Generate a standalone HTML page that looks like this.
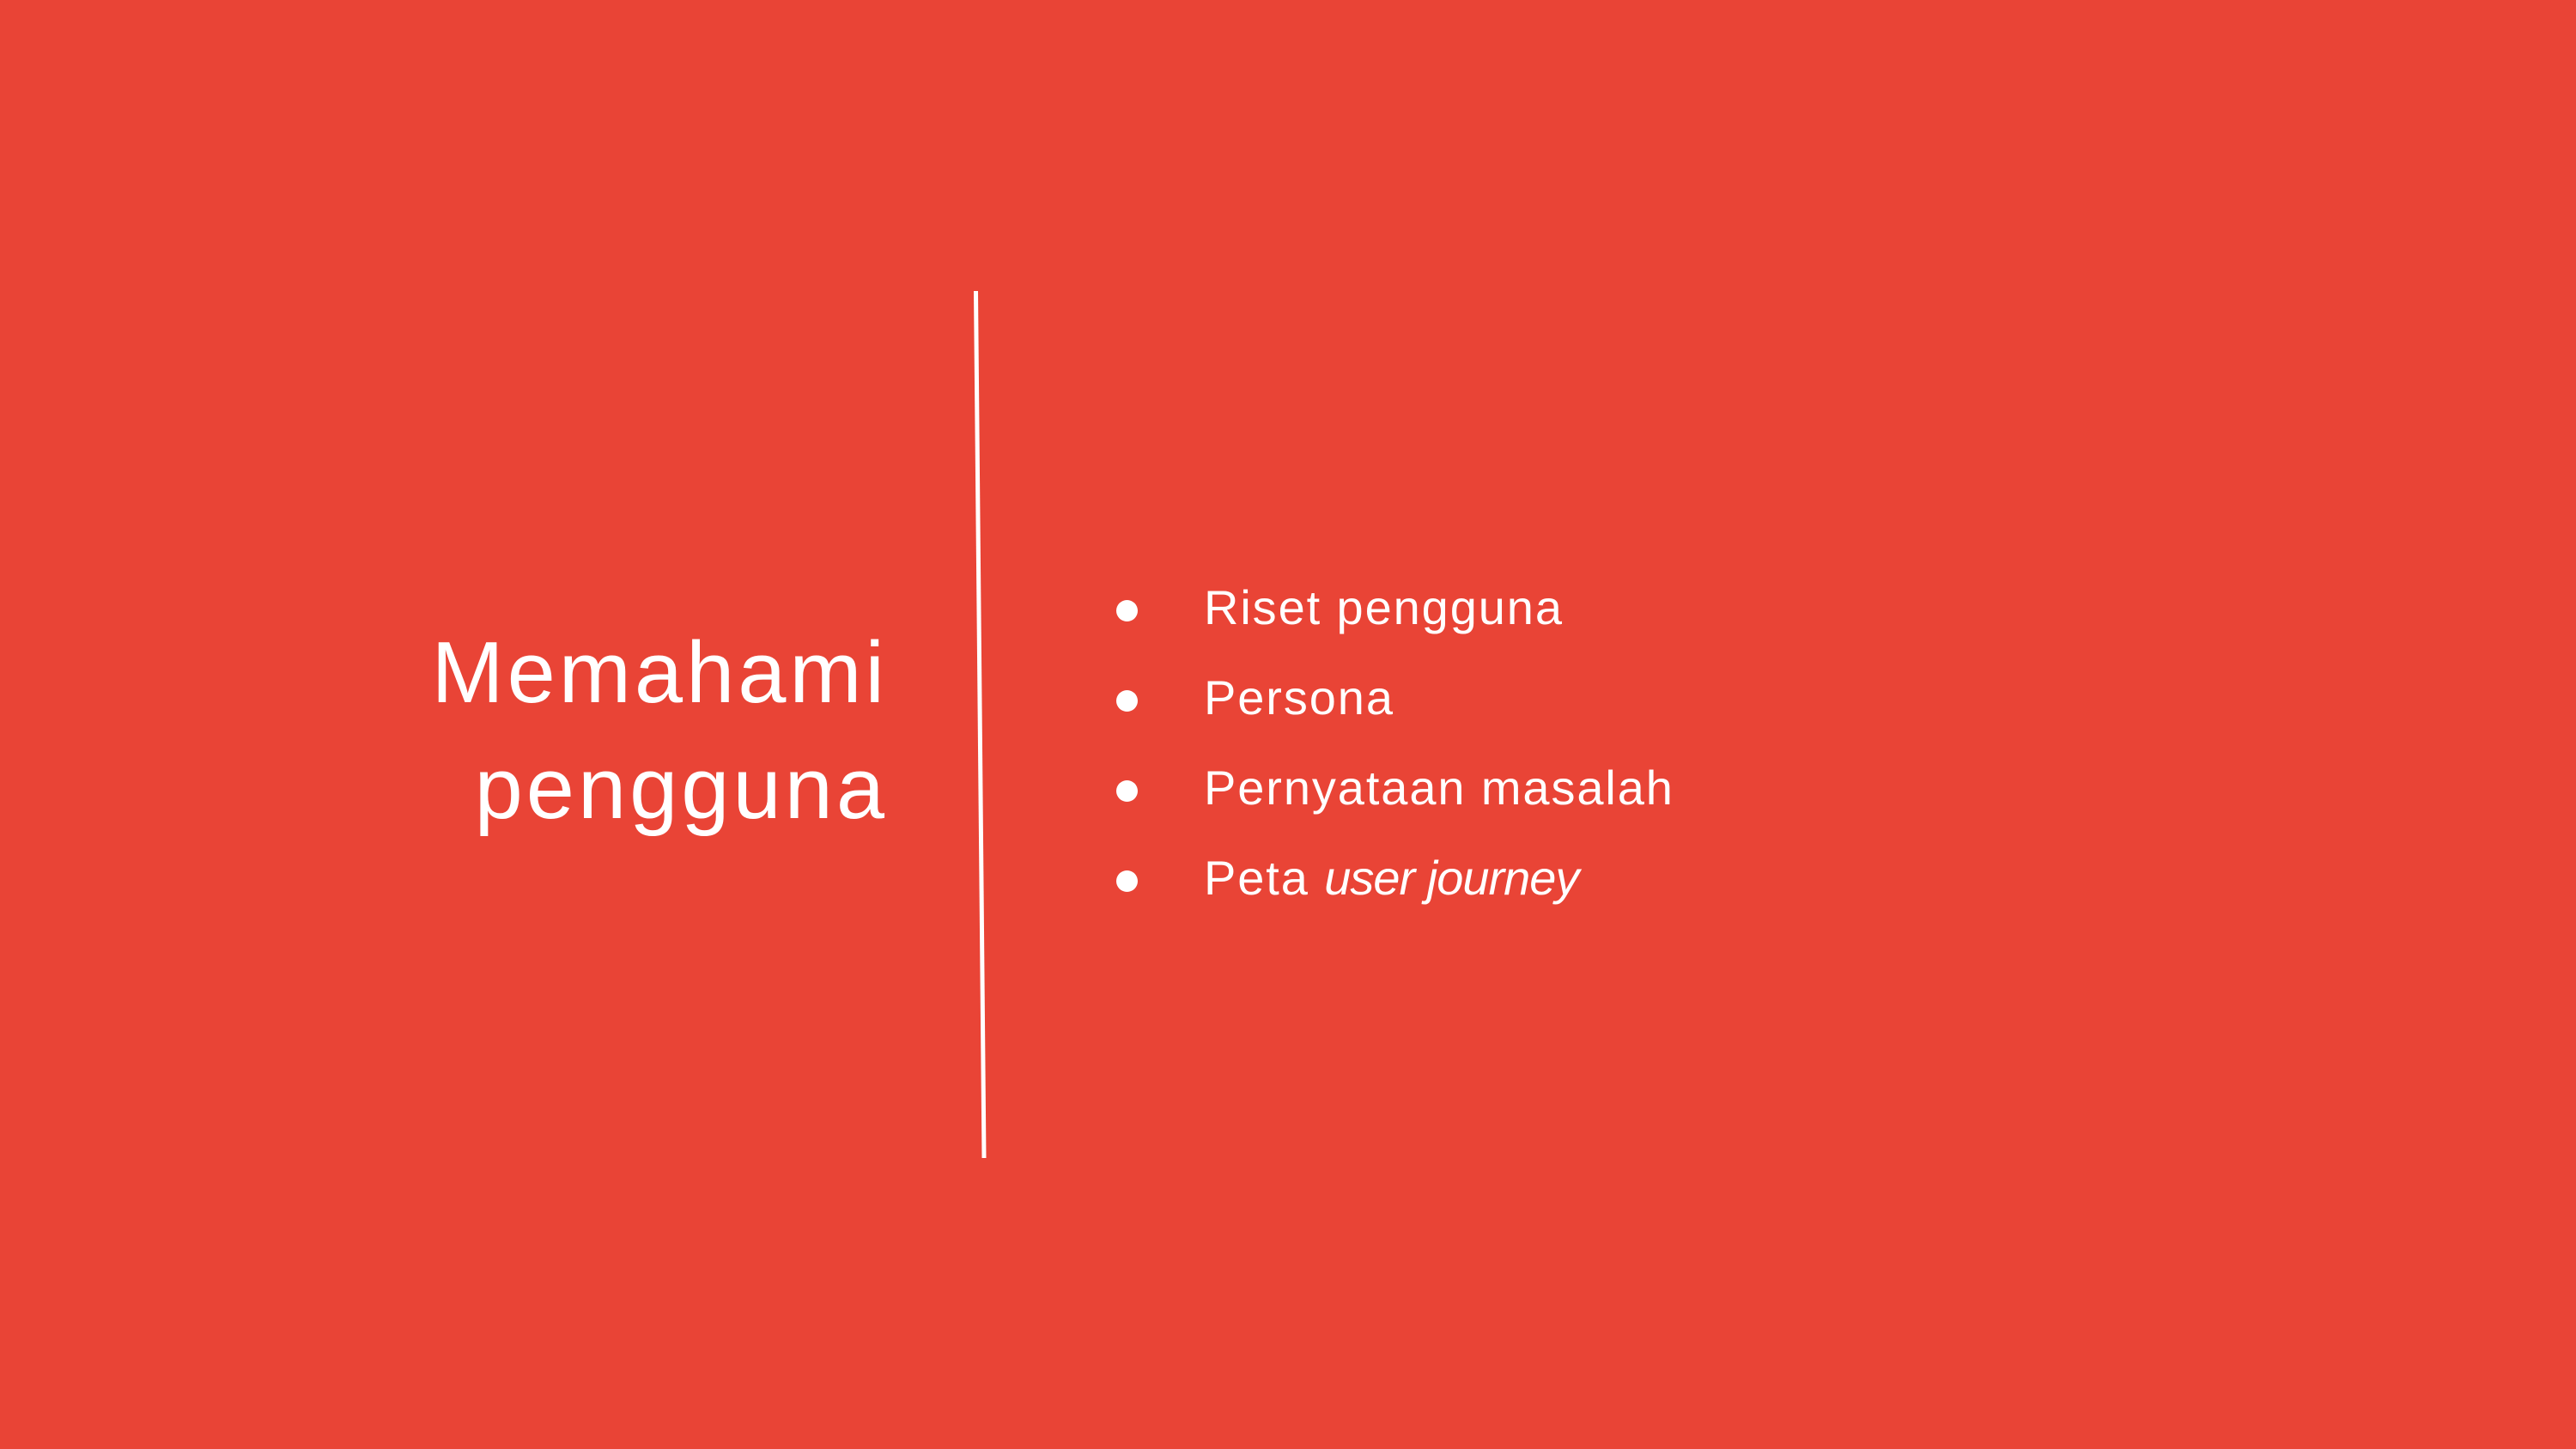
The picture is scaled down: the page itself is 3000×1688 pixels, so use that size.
<!DOCTYPE html>
<html><head><meta charset="utf-8"><style>
html,body{margin:0;padding:0}
body{width:3000px;height:1688px;background:#E94436;position:relative;overflow:hidden;font-family:"Liberation Sans",sans-serif;color:#fff}
.t{position:absolute;right:1966px;font-size:101px;line-height:101px;white-space:nowrap;text-align:right;letter-spacing:4px}
.b{position:absolute;left:1402px;font-size:56px;line-height:56px;white-space:nowrap;letter-spacing:1.9px}
.b i{letter-spacing:-1px}
.d{position:absolute;left:1300px;width:25px;height:25px;border-radius:50%;background:#fff}
</style></head><body>
<svg width="3000" height="1688" style="position:absolute;left:0;top:0"><line x1="1136.5" y1="339" x2="1146" y2="1349" stroke="#fff" stroke-width="5"/></svg>
<div class="t" style="top:734px">Memahami</div>
<div class="t" style="top:869px">pengguna</div>
<div class="d" style="top:699px"></div><div class="b" style="top:680px">Riset pengguna</div>
<div class="d" style="top:804px"></div><div class="b" style="top:785px">Persona</div>
<div class="d" style="top:909px"></div><div class="b" style="top:890px">Pernyataan masalah</div>
<div class="d" style="top:1014px"></div><div class="b" style="top:995px">Peta <i>user journey</i></div>
</body></html>
